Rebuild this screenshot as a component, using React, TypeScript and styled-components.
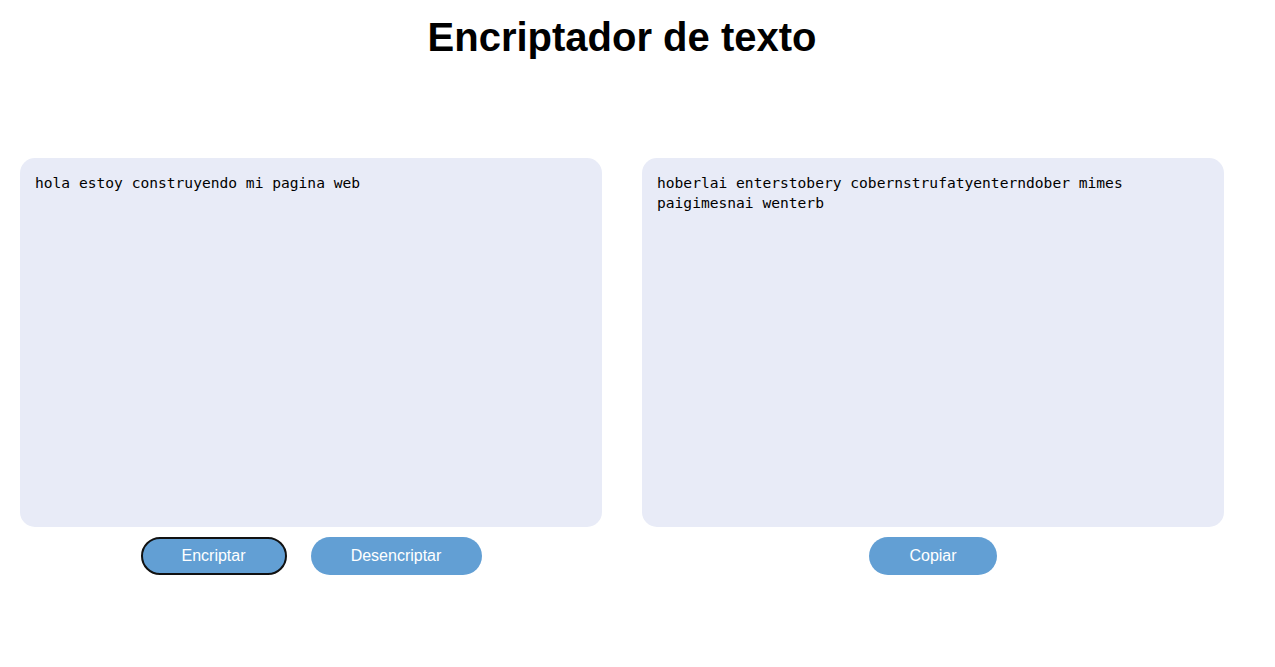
import React, { useState } from "react";
import styled, { createGlobalStyle } from "styled-components";

const Global = createGlobalStyle`
  html, body { margin: 0; padding: 0; background: #ffffff; }
  body { font-family: "Liberation Sans", Arial, sans-serif; }
`;

const Page = styled.main`
  width: 1204px;
  margin-left: 20px;
  display: flex;
  flex-direction: column;
`;

const Title = styled.h1`
  margin: 12px 0 0;
  font-size: 40px;
  line-height: 50px;
  font-weight: 700;
  text-align: center;
  color: #000;
`;

const Columns = styled.div`
  margin-top: 96px;
  display: grid;
  grid-template-columns: 582px 582px;
  column-gap: 40px;
`;

const Column = styled.section`
  display: flex;
  flex-direction: column;
  align-items: center;
  gap: 10px;
`;

const TextBox = styled.textarea`
  box-sizing: border-box;
  width: 582px;
  height: 369px;
  border: none;
  outline: none;
  resize: none;
  border-radius: 15px;
  background: #e8ebf7;
  padding: 15px 15px;
  font-family: "DejaVu Sans Mono", monospace;
  font-size: 14.6px;
  line-height: 20px;
  color: #000;
`;

const Actions = styled.div`
  display: flex;
  gap: 24px;
  justify-content: center;
`;

const Button = styled.button<{ $focused?: boolean; $width: number }>`
  box-sizing: border-box;
  width: ${(p) => p.$width}px;
  height: 38px;
  padding: 0;
  border-radius: 19px;
  border: 2px solid ${(p) => (p.$focused ? "#111111" : "transparent")};
  background: #629fd4;
  color: #ffffff;
  font-family: "Liberation Sans", Arial, sans-serif;
  font-size: 16px;
  cursor: pointer;
`;

export default function App() {
  const [input, setInput] = useState("hola estoy construyendo mi pagina web");
  const [output, setOutput] = useState(
    "hoberlai enterstobery cobernstrufatyenterndober mimes paigimesnai wenterb"
  );
  return (
    <>
      <Global />
      <Page>
        <Title>Encriptador de texto</Title>
        <Columns>
          <Column>
            <TextBox value={input} onChange={(e) => setInput(e.target.value)} />
            <Actions>
              <Button $focused $width={146}>Encriptar</Button>
              <Button $width={171}>Desencriptar</Button>
            </Actions>
          </Column>
          <Column>
            <TextBox value={output} onChange={(e) => setOutput(e.target.value)} />
            <Actions>
              <Button $width={128}>Copiar</Button>
            </Actions>
          </Column>
        </Columns>
      </Page>
    </>
  );
}
